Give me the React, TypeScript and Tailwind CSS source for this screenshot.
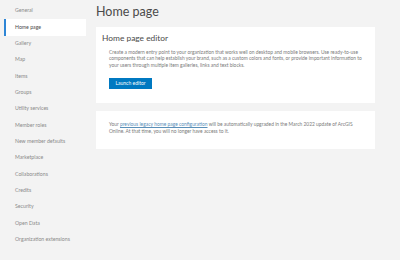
const NAV_ITEMS = [
  "General",
  "Home page",
  "Gallery",
  "Map",
  "Items",
  "Groups",
  "Utility services",
  "Member roles",
  "New member defaults",
  "Marketplace",
  "Collaborations",
  "Credits",
  "Security",
  "Open Data",
  "Organization extensions",
];

function NavItem({ label, active }: { label: string; active: boolean }) {
  if (active) {
    return (
      <div className="flex h-[16.35px] items-center border-l-2 border-[#2e86d6] bg-white pl-[9px] text-[#4a4a4a]">
        {label}
      </div>
    );
  }
  return <div className="flex h-[16.35px] items-center pl-[11px] text-[#8a8a8a]">{label}</div>;
}

export default function App() {
  return (
    <div className="flex h-[260px] w-[400px] bg-[#f3f3f3] font-['Lato','Noto_Sans',sans-serif]">
      <nav className="w-[88px] shrink-0 pl-1 pr-[2px] pt-[3px] text-[5.2px]">
        {NAV_ITEMS.map((item) => (
          <NavItem key={item} label={item} active={item === "Home page"} />
        ))}
      </nav>
      <main className="w-[287px] pl-2 pt-[5px]">
        <h1 className="text-[12.5px] leading-[14px] text-[#4a4a4a]">Home page</h1>
        <section className="mt-[8px] bg-white px-[6px] pb-[14px] pt-[5px]">
          <h2 className="text-[8.4px] leading-[12px] text-[#4a4a4a]">Home page editor</h2>
          <p className="mt-[4.5px] px-[7px] text-[4.9px] leading-[6.6px] text-[#7a7a7a]">
            Create a modern entry point to your organization that works well on desktop and mobile browsers. Use
            ready-to-use components that can help establish your brand, such as a custom colors and fonts, or provide
            important information to your users through multiple item galleries, links and text blocks.
          </p>
          <button className="ml-[7px] mt-[9.5px] flex h-[11px] w-[43px] items-center justify-center bg-[#0079c1] text-[5px] text-white">
            Launch editor
          </button>
        </section>
        <section className="mt-[8px] bg-white px-[13px] pb-[13.5px] pt-[10.5px]">
          <p className="text-[4.9px] leading-[7px] text-[#7a7a7a]">
            <span>Your </span>
            <a className="text-[#5a8fb8] underline">previous legacy home page configuration</a>
            <span>
              {" "}
              will be automatically upgraded in the March 2022 update of ArcGIS Online. At that time, you will no longer
              have access to it.
            </span>
          </p>
        </section>
      </main>
    </div>
  );
}
